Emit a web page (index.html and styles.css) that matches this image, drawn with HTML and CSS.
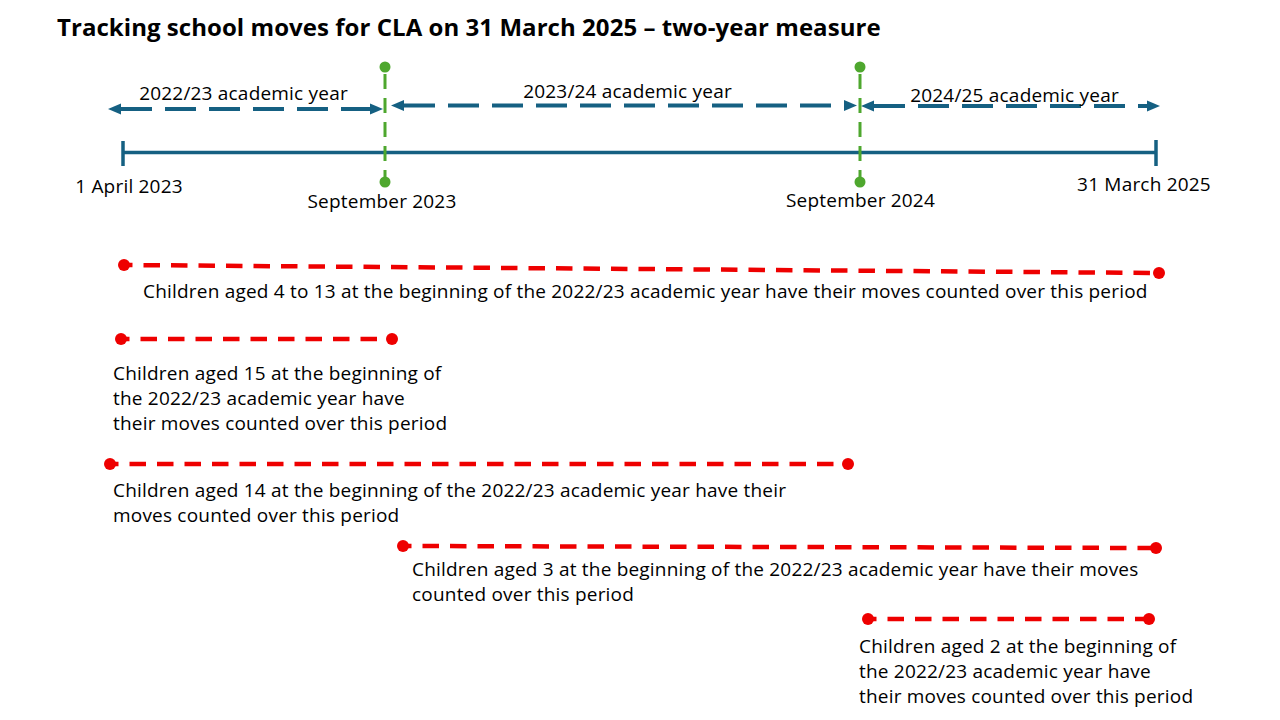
FILE: index.html
```html
<!DOCTYPE html>
<html lang="en">
<head>
<meta charset="utf-8">
<title>Tracking school moves for CLA on 31 March 2025 – two-year measure</title>
<link rel="stylesheet" href="styles.css">
</head>
<body>
<div class="slide">
  <h1 class="title">Tracking school moves for CLA on 31 March 2025 – two-year measure</h1>
  <svg class="diagram" viewBox="0 0 1280 720" width="1280" height="720" aria-label="Timeline diagram">
    <!-- academic year arrows -->
    <g class="year-arrow">
      <line x1="121" y1="109" x2="370" y2="109"/>
      <polygon points="108,109 121,103.5 121,114.5"/>
      <polygon points="383,109 370,103.5 370,114.5"/>
    </g>
    <g class="year-arrow">
      <line x1="404" y1="105.5" x2="844" y2="105.5"/>
      <polygon points="391,105.5 404,100 404,111"/>
      <polygon points="857,105.5 844,100 844,111"/>
    </g>
    <g class="year-arrow">
      <line x1="874" y1="106" x2="1147" y2="106"/>
      <polygon points="861,106 874,100.5 874,111.5"/>
      <polygon points="1160,106 1147,100.5 1147,111.5"/>
    </g>
    <text class="label" x="243.5" y="100" text-anchor="middle">2022/23 academic year</text>
    <text class="label" x="627.5" y="98" text-anchor="middle">2023/24 academic year</text>
    <text class="label" x="1014.5" y="102" text-anchor="middle">2024/25 academic year</text>

    <!-- main timeline -->
    <g class="timeline">
      <line x1="122" y1="152.5" x2="1156" y2="152.5"/>
      <line x1="123" y1="141" x2="123" y2="166"/>
      <line x1="1156" y1="140" x2="1156" y2="166"/>
    </g>

    <!-- September markers -->
    <g class="sept">
      <line x1="385" y1="74" x2="385" y2="177"/>
      <circle cx="385" cy="67" r="5.5"/>
      <circle cx="385" cy="182" r="5.5"/>
      <line x1="860" y1="74" x2="860" y2="177"/>
      <circle cx="860" cy="67" r="5.5"/>
      <circle cx="860" cy="182" r="5.5"/>
    </g>

    <text class="label" x="129" y="193" text-anchor="middle">1 April 2023</text>
    <text class="label" x="382" y="208" text-anchor="middle">September 2023</text>
    <text class="label" x="860.5" y="207" text-anchor="middle">September 2024</text>
    <text class="label" x="1144" y="191" text-anchor="middle">31 March 2025</text>

    <!-- periods -->
    <g class="period">
      <line x1="124" y1="265" x2="1159" y2="273"/>
      <circle cx="124" cy="265" r="6"/>
      <circle cx="1159" cy="273" r="6"/>
    </g>
    <text class="label" x="143" y="298">Children aged 4 to 13 at the beginning of the 2022/23 academic year have their moves counted over this period</text>

    <g class="period">
      <line x1="121" y1="339" x2="392" y2="339"/>
      <circle cx="121" cy="339" r="6"/>
      <circle cx="392" cy="339" r="6"/>
    </g>
    <text class="label">
      <tspan x="113" y="380">Children aged 15 at the beginning of</tspan>
      <tspan x="113" y="405">the 2022/23 academic year have</tspan>
      <tspan x="113" y="430">their moves counted over this period</tspan>
    </text>

    <g class="period">
      <line x1="110" y1="464" x2="848" y2="464"/>
      <circle cx="110" cy="464" r="6"/>
      <circle cx="848" cy="464" r="6"/>
    </g>
    <text class="label">
      <tspan x="113" y="497">Children aged 14 at the beginning of the 2022/23 academic year have their</tspan>
      <tspan x="113" y="522">moves counted over this period</tspan>
    </text>

    <g class="period">
      <line x1="403" y1="546" x2="1156" y2="548"/>
      <circle cx="403" cy="546" r="6"/>
      <circle cx="1156" cy="548" r="6"/>
    </g>
    <text class="label">
      <tspan x="412" y="576">Children aged 3 at the beginning of the 2022/23 academic year have their moves</tspan>
      <tspan x="412" y="601">counted over this period</tspan>
    </text>

    <g class="period">
      <line x1="868" y1="619" x2="1149" y2="619"/>
      <circle cx="868" cy="619" r="6"/>
      <circle cx="1149" cy="619" r="6"/>
    </g>
    <text class="label">
      <tspan x="859" y="653">Children aged 2 at the beginning of</tspan>
      <tspan x="859" y="678">the 2022/23 academic year have</tspan>
      <tspan x="859" y="703">their moves counted over this period</tspan>
    </text>
  </svg>
</div>
</body>
</html>
```

FILE: styles.css
```css
html, body {
  margin: 0;
  padding: 0;
  background: #ffffff;
}

.slide {
  position: relative;
  width: 1280px;
  height: 720px;
  overflow: hidden;
  background: #ffffff;
  font-family: "Open Sans", "Liberation Sans", Arial, sans-serif;
  color: #000000;
}

.title {
  position: relative;
  z-index: 1;
  margin: 0;
  padding: 12px 0 0 57px;
  font-size: 24px;
  line-height: 30px;
  font-weight: 700;
  letter-spacing: 0.05px;
}

.diagram {
  position: absolute;
  top: 0;
  left: 0;
}

.label {
  font-family: "Open Sans", "Liberation Sans", Arial, sans-serif;
  font-size: 19px;
  letter-spacing: 0.2px;
  fill: #000000;
}

.year-arrow line {
  stroke: #156082;
  stroke-width: 4;
  stroke-dasharray: 31 13;
  stroke-dashoffset: 0;
}

.year-arrow polygon {
  fill: #156082;
}

.timeline line {
  stroke: #156082;
  stroke-width: 3.5;
}

.sept line {
  stroke: #4ea72e;
  stroke-width: 3;
  stroke-dasharray: 15 9;
}

.sept circle {
  fill: #4ea72e;
}

.period line {
  stroke: #ee0000;
  stroke-width: 4.5;
  stroke-dasharray: 16.5 11;
  stroke-dashoffset: 8;
}

.period circle {
  fill: #ee0000;
}
```
